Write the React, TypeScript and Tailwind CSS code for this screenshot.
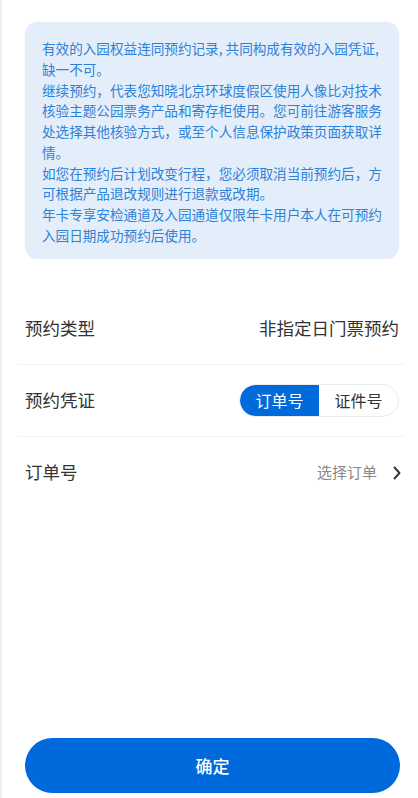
import React from "react";

export default function App() {
  const font = { fontFamily: '"Noto Sans CJK SC", "Noto Sans", sans-serif' };
  return (
    <div
      className="w-[418px] h-[798px] flex flex-col bg-white border-l-[2px] border-[#efefef] overflow-hidden"
      style={font}
    >
      <div className="ml-[23px] mt-[22px] w-[374px] rounded-[12px] bg-[#e4eefa] pl-[17px] pt-[16px] pb-[13px]">
        <div className="w-[348px] text-[13.6px] leading-[20.75px] text-[#2c82d8]">
          <p>有效的入园权益连同预约记录, 共同构成有效的入园凭证, 缺一不可。</p>
          <p>继续预约，代表您知晓北京环球度假区使用人像比对技术核验主题公园票务产品和寄存柜使用。您可前往游客服务处选择其他核验方式，或至个人信息保护政策页面获取详情。</p>
          <p>如您在预约后计划改变行程，您必须取消当前预约后，方可根据产品退改规则进行退款或改期。</p>
          <p>年卡专享安检通道及入园通道仅限年卡用户本人在可预约入园日期成功预约后使用。</p>
        </div>
      </div>

      <div className="ml-[16px] mr-[13px] mt-[34px]">
        <div className="h-[71px] flex items-center justify-between pl-[7px] pr-[6px] text-[17.5px] text-[#333333]">
          <span>预约类型</span>
          <span>非指定日门票预约</span>
        </div>
        <div className="h-px bg-[#f3f3f3]" />
        <div className="h-[71px] flex items-center justify-between pl-[7px] pr-[6px] text-[17.5px] text-[#333333]">
          <span>预约凭证</span>
          <div className="flex h-[33px] w-[160px] rounded-full border border-[#ececec] overflow-hidden text-[16px]">
            <div className="flex-1 flex items-center justify-center bg-[#0069db] text-white rounded-l-full">订单号</div>
            <div className="flex-1 flex items-center justify-center text-[#333333]">证件号</div>
          </div>
        </div>
        <div className="h-px bg-[#f3f3f3]" />
        <div className="h-[72px] flex items-center justify-between pl-[7px] pr-[4px] text-[17.5px] text-[#333333]">
          <span>订单号</span>
          <div className="flex items-center gap-[16px]">
            <span className="text-[15px] text-[#888888]">选择订单</span>
            <svg width="8" height="14" viewBox="0 0 8 14" fill="none">
              <path d="M1.5 1.5 L6.5 7 L1.5 12.5" stroke="#333333" strokeWidth="1.9" strokeLinecap="round" strokeLinejoin="round" />
            </svg>
          </div>
        </div>
      </div>

      <div className="mt-auto mb-[5px] ml-[23px] w-[375px]">
        <button className="w-full h-[55px] rounded-full bg-[#0069db] text-white text-[17px] font-medium flex items-center justify-center">
          确定
        </button>
      </div>
    </div>
  );
}
